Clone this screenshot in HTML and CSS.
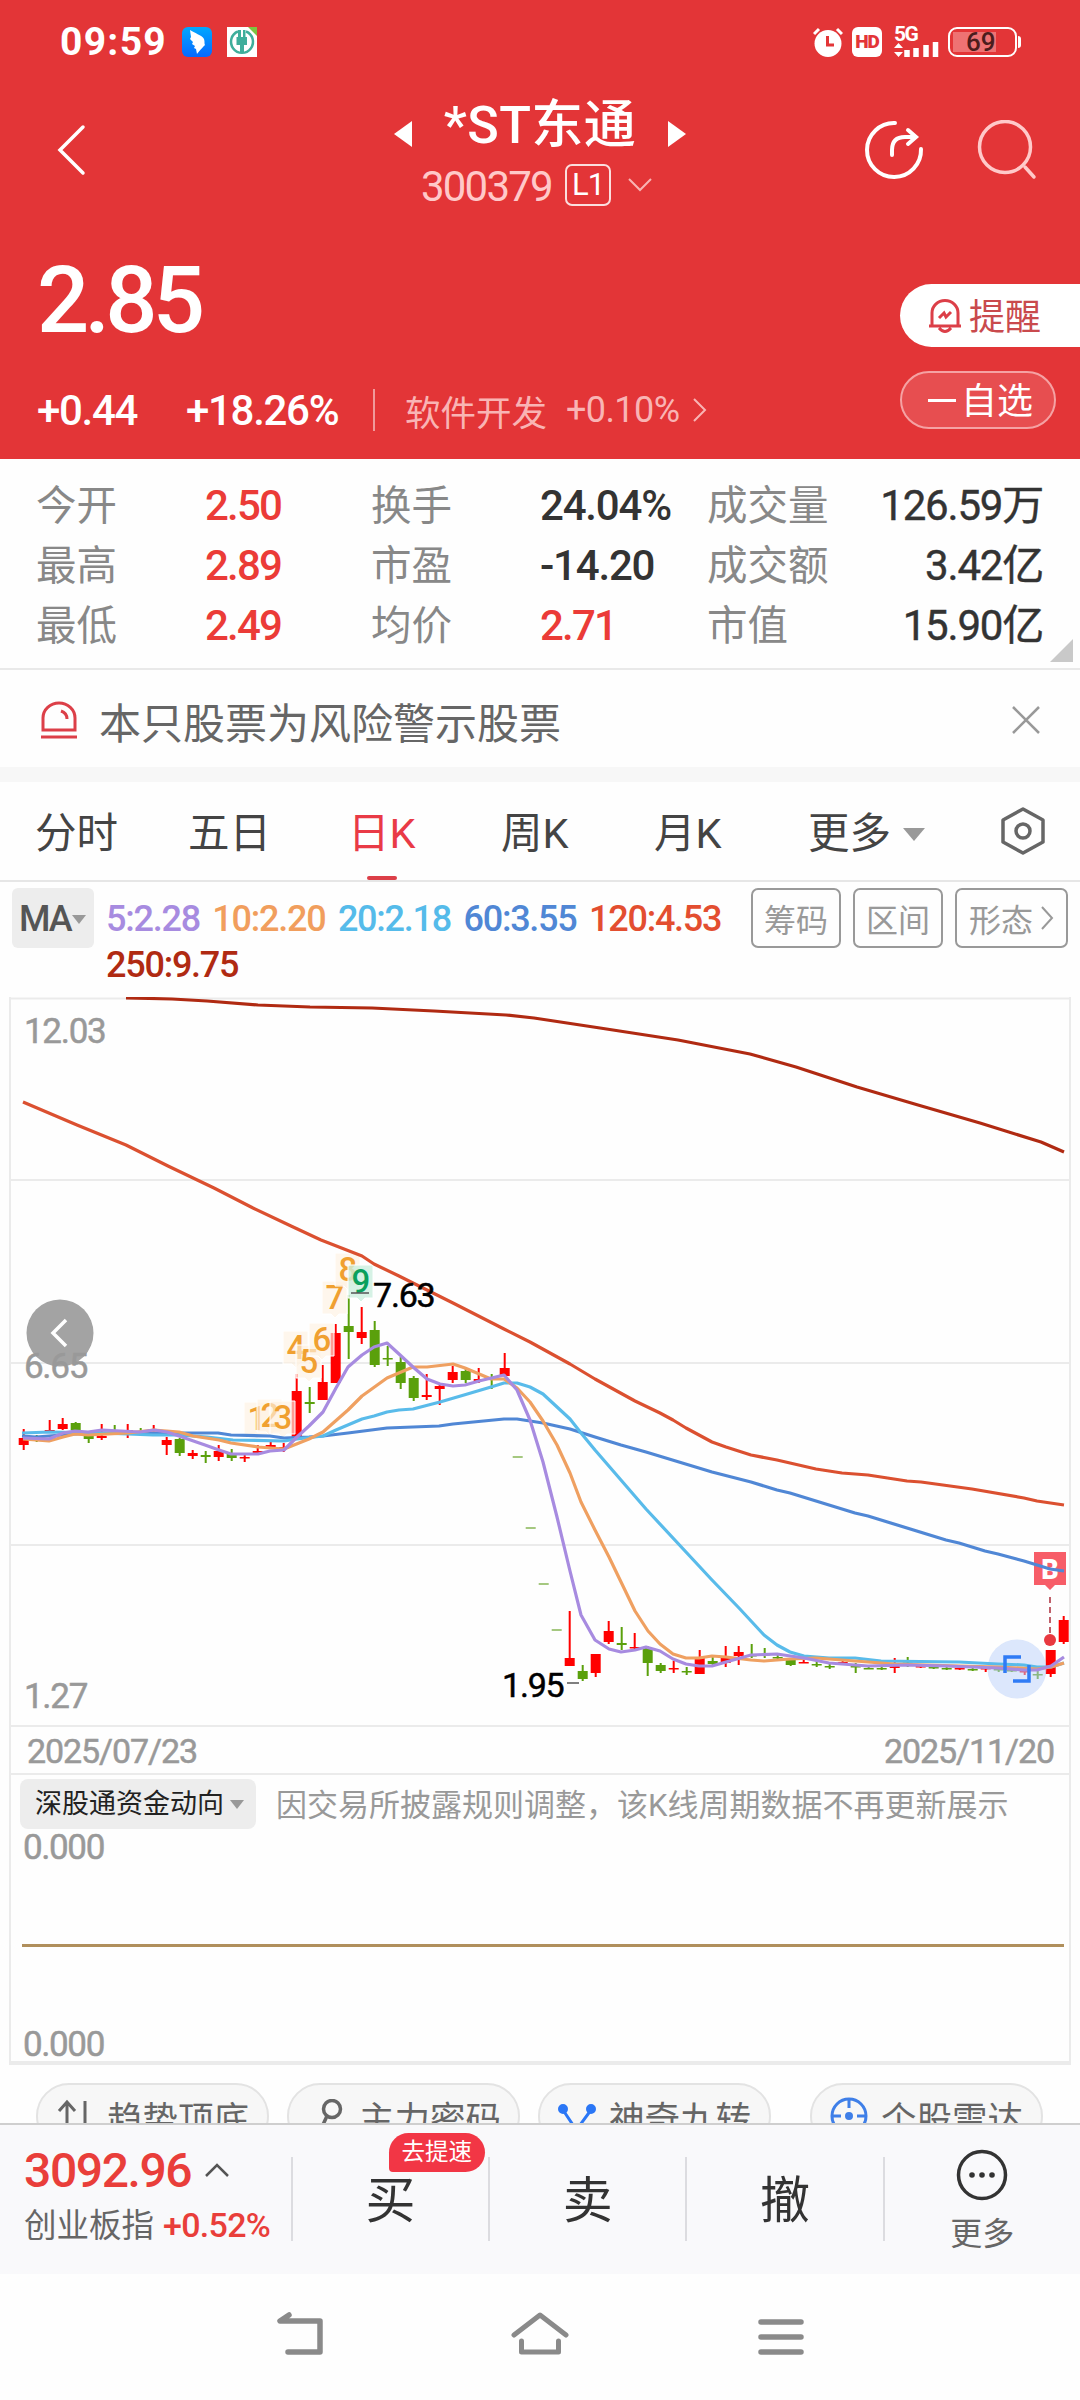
FILE: index.html
```html
<!DOCTYPE html>
<html lang="zh-CN">
  <head>
    <meta charset="UTF-8" />
    <title>*ST东通 300379</title>
    <link rel="stylesheet" href="styles.css">
  </head>
  <body>
    <header class="header">
      <div class="status-bar">
        <span class="clock">09:59</span>
        <svg class="app-icon" width="30" height="30" viewBox="0 0 30 30">
          <defs>
            <linearGradient id="wingBg" x1="0" y1="0" x2="0" y2="1">
              <stop offset="0" stop-color="#00a8ff" />
              <stop offset="1" stop-color="#0868ff" />
            </linearGradient>
          </defs>
          <rect width="30" height="30" rx="6" fill="url(#wingBg)" />
          <path d="M8 3C12 6 20 8 22 12C23 15 22 17 23 18C21 20 19 22 15 27L14 22L12 21L13 19L10 17L11 15L8 12L9 10Z" fill="#fff" />
        </svg>
        <svg class="app-icon" width="30" height="30" viewBox="0 0 30 30">
          <rect width="30" height="30" fill="#fff" />
          <path d="M11 4.500A11 11 0 1 0 19 4.500" fill="none" stroke="#3fae9b" stroke-width="2.500" />
          <path d="M11 3V10H9.500V18H13V26H17V18H20V10H18.500V3H16V10H14V3Z" fill="#3fae9b" />
          <path d="M21 0H30V9Z" fill="#7cc440" />
        </svg>
        <div class="status-right">
          <svg width="30" height="30" viewBox="0 0 30 30">
            <circle cx="15" cy="16.500" r="13.500" fill="#fff" />
            <path d="M1 7L6 2M29 7L24 2" stroke="#fff" stroke-width="3" />
            <path d="M14.500 9V18H21" fill="none" stroke="#e33537" stroke-width="3" />
          </svg>
          <span class="hd">HD</span>
          <div class="signal">
            <span>5G</span>
            <svg width="45" height="16" viewBox="0 0 45 16">
              <path d="M0 6L4.500 1L9 6ZM0 10H9L4.500 15Z" fill="#fff" />
              <path d="M13 8V15M22 6V15M32 3V15M41.500 0V15" stroke="#fff" stroke-width="5.500" />
            </svg>
          </div>
          <div class="battery"><span>69</span></div>
        </div>
      </div>

      <div class="title-bar">
        <svg class="back" width="32" height="52" viewBox="0 0 32 52">
          <path d="M28 3L5 26L28 49" fill="none" stroke="#fff" stroke-width="3.500" stroke-linecap="round" />
        </svg>
        <div class="title">
          <div class="name-row">
            <svg width="19" height="28" viewBox="0 0 19 28"><path d="M19 1V27L1 14Z" fill="#fff" /></svg>
            <h1>*ST东通</h1>
            <svg width="19" height="28" viewBox="0 0 19 28"><path d="M0 1V27L18 14Z" fill="#fff" /></svg>
          </div>
          <div class="code-row">
            <span class="code">300379</span>
            <span class="level">L1</span>
            <svg width="24" height="14" viewBox="0 0 24 14"><path d="M1 1L12 12L23 1" fill="none" stroke="#f9b4b4" stroke-width="2" /></svg>
          </div>
        </div>
        <div class="title-actions">
          <svg width="60" height="60" viewBox="0 0 60 60" fill="none" stroke="#fff" stroke-width="4" stroke-linecap="round">
            <path d="M31 3A27 27 0 1 0 57 29" />
            <path d="M28 35V30Q28 17 41 17H50M44 10L52 17L44 24" />
          </svg>
          <svg width="60" height="60" viewBox="0 0 60 60" fill="none" stroke="#ffc9c9" stroke-width="3.500" stroke-linecap="round">
            <circle cx="28" cy="27" r="25.500" />
            <path d="M48 47L57 57" />
          </svg>
        </div>
      </div>

      <div class="quote">
        <div class="quote-left">
          <div class="price">2.85</div>
          <div class="change-row">
            <span class="change">+0.44</span>
            <span class="change percent">+18.26%</span>
            <span class="sector">软件开发</span>
            <span class="sector-change">+0.10%</span>
            <svg width="14" height="24" viewBox="0 0 14 24"><path d="M1 1L12 12L1 23" fill="none" stroke="#f9b4b4" stroke-width="2" /></svg>
          </div>
        </div>
        <div class="quote-right">
          <div class="remind">
            <svg width="34" height="36" viewBox="0 0 34 36" fill="none" stroke="#dc3f48" stroke-width="3">
              <path d="M4 27V15A13 12.500 0 0 1 30 15V27M1 28H33M11 30Q17 37 23 30" />
              <path d="M11 20L16 15L18 19L23 14" />
            </svg>
            <span>提醒</span>
          </div>
          <div class="favorite"><i></i><span>自选</span></div>
        </div>
      </div>
    </header>

    <section class="stats">
      <span class="label">今开</span><span class="value up">2.50</span>
      <span class="label">换手</span><span class="value">24.04%</span>
      <span class="label">成交量</span><span class="value right">126.59万</span>
      <span class="label">最高</span><span class="value up">2.89</span>
      <span class="label">市盈</span><span class="value">-14.20</span>
      <span class="label">成交额</span><span class="value right">3.42亿</span>
      <span class="label">最低</span><span class="value up">2.49</span>
      <span class="label">均价</span><span class="value up">2.71</span>
      <span class="label">市值</span><span class="value right">15.90亿</span>
      <i class="corner"></i>
    </section>

    <section class="notice">
      <svg width="36" height="38" viewBox="0 0 36 38" fill="none" stroke="#dc3f48" stroke-width="3">
        <path d="M2 29V17A16 15 0 0 1 34 17V29ZM0 36H36M20 10Q26 12 26 18" />
      </svg>
      <span>本只股票为风险警示股票</span>
      <svg class="close" width="28" height="28" viewBox="0 0 28 28"><path d="M1 1L27 27M27 1L1 27" stroke="#999" stroke-width="2.500" /></svg>
    </section>

    <nav class="tabs">
      <span>分时</span>
      <span>五日</span>
      <span class="active">日K</span>
      <span>周K</span>
      <span>月K</span>
      <span>更多<i class="arrow-down"></i></span>
      <svg width="46" height="48" viewBox="0 0 46 48" fill="none" stroke="#666" stroke-width="3.500" stroke-linejoin="round">
        <path d="M23 2L43 13V35L23 46L3 35V13Z" />
        <circle cx="23" cy="24" r="7" />
      </svg>
    </nav>

    <section class="ma-bar">
      <div class="ma-select">MA<i class="arrow-down small"></i></div>
      <div class="ma-list">
        <span class="ma5">5:2.28</span>
        <span class="ma10">10:2.20</span>
        <span class="ma20">20:2.18</span>
        <span class="ma60">60:3.55</span>
        <span class="ma120">120:4.53</span>
        <span class="ma250">250:9.75</span>
      </div>
      <div class="tools">
        <span>筹码</span>
        <span>区间</span>
        <span>形态<svg width="14" height="24" viewBox="0 0 14 24"><path d="M2 1L12 12L2 23" fill="none" stroke="#999" stroke-width="2" /></svg></span>
      </div>
    </section>

    <section class="chart-box">
      <svg id="chart" width="1080" height="730" viewBox="0 997 1080 730">
        <g class="grid">
          <path d="M10 998.500H1070M10 1180H1070M10 1363H1070M10 1545H1070M10 1726H1070" />
        </g>
        <g id="candles"></g>
        <g id="tags"></g>
        <g class="buy">
          <path d="M1034 1552H1066V1585H1055L1050 1590L1045 1585H1034Z" fill="#f75d68" />
          <text x="1050" y="1579">B</text>
          <path d="M1050 1597V1635" stroke="#c0606a" stroke-width="2" stroke-dasharray="6 4" />
          <circle cx="1050" cy="1640" r="6" fill="#e8383f" />
        </g>
        <circle cx="1017" cy="1669" r="29.500" fill="#b9d0fa" fill-opacity=".5" />
        <g id="lines"></g>
        <path d="M351 1293H369M567 1683H579" stroke="#555" stroke-width="1.500" />
        <text class="mark" x="373" y="1307">7.63</text>
        <text class="mark" x="502" y="1697">1.95</text>
        <circle cx="60" cy="1333" r="33.500" fill="#a3a3a3" />
        <path d="M66 1320L53 1333L66 1346" fill="none" stroke="#fff" stroke-width="3.500" />
        <text class="axis" x="24" y="1043">12.03</text>
        <text class="axis" x="24" y="1378">6.65</text>
        <text class="axis" x="24" y="1708">1.27</text>
        <path d="M1021 1657H1005V1673M1013 1681H1029V1665" fill="none" stroke="#2f7bf5" stroke-width="3.500" />
      </svg>
      <div class="dates"><span>2025/07/23</span><span>2025/11/20</span></div>
      <div class="sub-head">
        <span class="sub-select">深股通资金动向<i class="arrow-down small"></i></span>
        <span class="sub-note">因交易所披露规则调整，该K线周期数据不再更新展示</span>
      </div>
      <div class="sub-chart">
        <span>0.000</span>
        <i></i>
        <span>0.000</span>
      </div>
    </section>

    <section class="chips">
      <div class="chip">
        <svg width="34" height="34" viewBox="0 0 34 34" fill="none" stroke="#666" stroke-width="3"><path d="M11 32V3M3 12L11 3L19 12M29 2V32" /></svg>趋势顶底
      </div>
      <div class="chip key">
        <svg width="34" height="34" viewBox="0 0 34 34" fill="none" stroke="#666" stroke-width="3.500"><circle cx="19" cy="10" r="8.500" /><path d="M14 17L8 30" /></svg>主力密码
      </div>
      <div class="chip wide">
        <svg width="38" height="34" viewBox="0 0 38 34" fill="none" stroke="#2b77f6" stroke-width="3"><path d="M5 11L15 26H22L33 11" /><g fill="#2b77f6"><circle cx="5" cy="10" r="3.500" /><circle cx="33" cy="10" r="3.500" /></g></svg>神奇九转
      </div>
      <i class="chip-line"></i>
      <div class="chip wide">
        <svg width="38" height="38" viewBox="0 0 38 38" fill="none" stroke="#3f7fe8" stroke-width="3"><circle cx="19" cy="19" r="17" /><path d="M19 2V11M2 19H11M27 19H36" /><circle cx="19" cy="19" r="2.500" fill="#3f7fe8" /></svg>个股雷达
      </div>
    </section>

    <footer class="trade-bar">
      <div class="index">
        <div class="index-value">3092.96<svg width="24" height="14" viewBox="0 0 24 14"><path d="M1 13L12 2L23 13" fill="none" stroke="#555" stroke-width="2.500" /></svg></div>
        <div class="index-name">创业板指 <b>+0.52%</b></div>
      </div>
      <div class="trade">买<span class="badge">去提速</span></div>
      <div class="trade">卖</div>
      <div class="trade">撤</div>
      <div class="trade more">
        <svg width="52" height="52" viewBox="0 0 52 52">
          <circle cx="26" cy="26" r="23.500" fill="none" stroke="#333" stroke-width="3.500" />
          <g fill="#333"><circle cx="16" cy="26" r="2.800" /><circle cx="26" cy="26" r="2.800" /><circle cx="36" cy="26" r="2.800" /></g>
        </svg>
        <span>更多</span>
      </div>
    </footer>

    <div class="system-nav">
      <svg width="48" height="44" viewBox="0 0 48 44" fill="none" stroke="#8a8a8a" stroke-width="5.500" stroke-linecap="round" stroke-linejoin="round">
        <path d="M13 3L4 9H44V40H12" />
      </svg>
      <svg width="58" height="44" viewBox="0 0 58 44" fill="none" stroke="#8a8a8a" stroke-width="5" stroke-linecap="round" stroke-linejoin="round">
        <path d="M3 23L29 3L55 23M10.500 29V40H47.500V29" />
      </svg>
      <svg width="46" height="44" viewBox="0 0 46 44" fill="none" stroke="#8a8a8a" stroke-width="5.500" stroke-linecap="round">
        <path d="M3 10H43M3 25H43M3 40H43" />
      </svg>
    </div>
    <script src="chart.js"></script>
  </body>
</html>
```

FILE: styles.css
```css
* {
  box-sizing: border-box;
}
body {
  margin: 0;
  width: 1080px;
  height: 2400px;
  overflow: hidden;
  background: #fefefe;
  color: #333;
  font-family: Roboto, "Noto Sans CJK SC", sans-serif;
  display: flex;
  flex-direction: column;
}
svg {
  display: block;
  flex: none;
}

/* Header */
.header {
  height: 459px;
  background: #e33537;
  color: #fff;
}
.status-bar {
  display: flex;
  align-items: center;
  height: 84px;
  padding: 0 60px 0 60px;
}
.clock {
  width: 122px;
  font-size: 39px;
  font-weight: 700;
  letter-spacing: 1.3px;
}
.app-icon {
  margin-right: 15px;
}
.status-right {
  display: flex;
  align-items: center;
  margin-left: auto;
}
.hd {
  width: 30px;
  height: 30px;
  margin: 0 12px 0 9px;
  border-radius: 6px;
  background: #fff;
  color: #e33537;
  font-size: 19px;
  font-weight: 900;
  line-height: 30px;
  text-align: center;
  letter-spacing: -1px;
}
.signal {
  width: 45px;
  height: 32px;
  margin-right: 9px;
}
.signal span {
  display: block;
  height: 16px;
  font-size: 21px;
  font-weight: 700;
  line-height: 17px;
  letter-spacing: -1.5px;
}
.battery {
  position: relative;
  width: 69px;
  height: 30px;
  padding: 3px;
  border: 2px solid #fff;
  border-radius: 9px;
  margin-right: 3px;
}
.battery span {
  display: block;
  width: 43px;
  height: 20px;
  padding-left: 13px;
  background: #ee7273;
  color: #4c1c1c;
  font-size: 26px;
  font-weight: 500;
  line-height: 21px;
}
.battery::after {
  content: "";
  position: absolute;
  right: -6px;
  top: 7px;
  width: 3px;
  height: 12px;
  border-radius: 0 3px 3px 0;
  background: #fff;
}
.title-bar {
  display: grid;
  grid-template-columns: 340px 400px 340px;
  height: 140px;
}
.back {
  margin: 40px 0 0 55px;
}
.name-row {
  display: flex;
  align-items: center;
  justify-content: center;
  height: 80px;
  padding-top: 18px;
}
.name-row svg {
  margin-top: 2px;
}
h1 {
  width: 256px;
  margin: -14px 0 0;
  font-size: 52px;
  font-weight: 500;
  line-height: 60px;
  text-align: center;
  letter-spacing: 0.5px;
}
.code-row {
  display: flex;
  align-items: center;
  height: 46px;
  margin-top: -3px;
  padding: 2px 0 0 81px;
}
.code {
  width: 144px;
  padding-top: 2px;
  color: #ffc9c9;
  font-size: 42px;
  letter-spacing: -1.8px;
}
.level {
  width: 46px;
  height: 42px;
  margin-right: 17px;
  border: 2px solid #fbdede;
  border-radius: 7px;
  font-size: 31px;
  line-height: 38px;
  text-align: center;
  letter-spacing: -1px;
}
.title-actions {
  display: flex;
  gap: 53px;
  padding: 36px 0 0 124px;
}
.quote {
  display: flex;
  justify-content: space-between;
}
.quote-left {
  padding-left: 37px;
}
.price {
  height: 148px;
  font-size: 92px;
  font-weight: 500;
  line-height: 154px;
  letter-spacing: -4.8px;
}
.change-row {
  display: flex;
  align-items: center;
  height: 76px;
}
.change {
  width: 149px;
  font-size: 42px;
  font-weight: 500;
  letter-spacing: -1.3px;
}
.percent {
  width: 187px;
}
.sector {
  display: flex;
  align-items: center;
  height: 42px;
  padding-left: 30px;
  border-left: 2px solid #f09a9b;
  color: #f9b4b4;
  font-size: 35.5px;
}
.sector-change {
  width: 127px;
  margin-left: 19px;
  color: #f9b4b4;
  font-size: 36px;
  letter-spacing: -0.6px;
}
.quote-right {
  width: 180px;
  padding-top: 60px;
}
.remind,
.favorite {
  display: flex;
  align-items: center;
  font-size: 36px;
}
.remind span,
.favorite span {
  padding-bottom: 4px;
}
.remind {
  height: 63px;
  padding-left: 28px;
  gap: 7px;
  border-radius: 32px 0 0 32px;
  background: #fff;
  color: #c94a4d;
}
.favorite {
  width: 156px;
  height: 58px;
  margin-top: 24px;
  padding-left: 26px;
  gap: 5px;
  border: 2px solid #f5a2a3;
  border-radius: 29px;
  background: #e74e50;
}
.favorite i {
  width: 28px;
  height: 3px;
  background: #fff;
}

/* Today's figures */
.stats {
  position: relative;
  display: grid;
  grid-template-columns: 168px 167px 168px 168px 140px 1fr;
  grid-auto-rows: 60px;
  height: 211px;
  padding: 17px 37px 0 36px;
  border-bottom: 2px solid #e9e9e9;
  line-height: 60px;
}
.label {
  color: #888;
  font-size: 40.5px;
}
.value {
  padding-left: 1px;
  font-size: 42px;
  font-weight: 500;
  letter-spacing: -1.2px;
  white-space: nowrap;
}
.up {
  color: #eb3b37;
  letter-spacing: -1.8px;
}
.right {
  font-weight: 400;
  text-align: right;
  -webkit-text-stroke: 0.4px #333;
}
.corner {
  position: absolute;
  right: 7px;
  bottom: 6px;
  border-left: 23px solid transparent;
  border-bottom: 23px solid #c9c9c9;
}

.notice {
  display: flex;
  align-items: center;
  height: 112px;
  padding: 2px 40px 0 41px;
  border-bottom: 15px solid #f7f7f7;
  color: #666;
  font-size: 42px;
}
.notice span {
  margin: 2px 0 0 22px;
}
.close {
  margin-left: auto;
}

/* Period tabs */
.tabs {
  display: grid;
  grid-template-columns: 153px 160px 153px 153px 154px 192px 1fr;
  align-items: center;
  height: 100px;
  padding-left: 35px;
  border-bottom: 2px solid #e6e6e6;
  color: #444;
  font-size: 41.5px;
}
.tabs span {
  position: relative;
  height: 98px;
  line-height: 103px;
}
.tabs .active {
  color: #e93a46;
}
.active::after {
  content: "";
  position: absolute;
  left: 19px;
  bottom: 0;
  width: 30px;
  height: 4px;
  border-radius: 2px;
  background: #dc3f48;
}
.arrow-down {
  display: inline-block;
  margin-left: 12px;
  border: 11px solid transparent;
  border-top: 13px solid #999;
  border-bottom: 0;
  vertical-align: 7px;
}
.small {
  margin-left: 1px;
  border-width: 9px 7px 0;
}

/* Moving averages */
.ma-bar {
  display: flex;
  height: 115px;
  padding: 6px 12px 0;
}
.ma-select {
  width: 82px;
  height: 60px;
  padding-left: 7px;
  border-radius: 6px;
  background: #ededed;
  color: #555;
  font-size: 36px;
  font-weight: 500;
  line-height: 63px;
  letter-spacing: -2px;
  white-space: nowrap;
}
.ma-list {
  display: flex;
  flex-wrap: wrap;
  align-content: flex-start;
  width: 643px;
  padding: 8px 0 0 12px;
  column-gap: 12.5px;
  font-size: 36px;
  font-weight: 500;
  line-height: 46px;
  letter-spacing: -1.25px;
}
.ma5 { color: #a78be0; }
.ma10 { color: #f19e5d; }
.ma20 { color: #55bbea; }
.ma60 { color: #5087d5; }
.ma120 { color: #e34e30; }
.ma250 { color: #b02a12; }
.tools {
  display: flex;
  gap: 12px;
  margin-left: 14px;
}
.tools span {
  display: flex;
  align-items: center;
  justify-content: center;
  width: 90px;
  height: 60px;
  border: 2px solid #999;
  border-radius: 7px;
  color: #999;
  font-size: 32px;
}
.tools span:last-child {
  width: 113px;
  gap: 7px;
}

/* Charts */
.chart-box {
  height: 1068px;
  background: linear-gradient(#ebebeb, #ebebeb) 9px 0 / 2px 1066px no-repeat,
    linear-gradient(#ebebeb, #ebebeb) 1069px 0 / 2px 1066px no-repeat;
}
.grid {
  stroke: #ebebeb;
  stroke-width: 2;
}
.axis {
  fill: #999;
  font-size: 35px;
  letter-spacing: -1.3px;
  stroke: #999;
  stroke-width: 0.5;
}
.mark {
  fill: #000;
  font-size: 34px;
  letter-spacing: -1.2px;
  stroke: #000;
  stroke-width: 0.5;
}
.tag {
  font-size: 33px;
  font-weight: 500;
  text-anchor: middle;
}
.buy text {
  fill: #fff;
  font-size: 27px;
  font-weight: 900;
  text-anchor: middle;
}
.dates {
  display: flex;
  justify-content: space-between;
  height: 48px;
  margin: 0 10px;
  padding: 0 16px 0 17px;
  border-bottom: 2px solid #ebebeb;
  color: #999;
  font-size: 34px;
  line-height: 49px;
  letter-spacing: -1.1px;
  -webkit-text-stroke: 0.5px #999;
}
.sub-head {
  display: flex;
  align-items: center;
  height: 56px;
  padding: 1px 0 0 20px;
}
.sub-select {
  width: 236px;
  height: 50px;
  margin-right: 20px;
  padding-left: 15px;
  border-radius: 8px;
  background: #ededed;
  color: #222;
  font-size: 27px;
  line-height: 51px;
  white-space: nowrap;
}
.sub-select .small {
  margin-left: 6px;
  vertical-align: 4px;
}
.sub-note {
  margin-top: -2px;
  color: #999;
  font-size: 31px;
  white-space: nowrap;
}
.sub-chart {
  display: flex;
  flex-direction: column;
  justify-content: space-between;
  height: 234px;
  margin: 0 9px;
  padding: 0 14px;
  border-bottom: 4px solid #ebebeb;
  color: #999;
  font-size: 35px;
  line-height: 33px;
  letter-spacing: -1.4px;
  -webkit-text-stroke: 0.5px #999;
}
.sub-chart i {
  height: 3px;
  margin: -1px -7px 0 -1px;
  background: #b08f5c;
}

/* Shortcuts, cut off by the trade bar */
.chips {
  display: flex;
  height: 58px;
  padding: 18px 36px 0;
  overflow: hidden;
}
.chip {
  display: flex;
  align-items: center;
  flex: none;
  width: 233px;
  height: 66px;
  margin-right: 18px;
  padding-left: 18px;
  gap: 17px;
  border: 2px solid #e3e3e3;
  border-radius: 33px;
  background: #f7f7f7;
  color: #666;
  font-size: 35.5px;
  white-space: nowrap;
}
.key {
  padding-left: 24px;
  gap: 12px;
}
.wide {
  gap: 13px;
}
.chip-line {
  width: 2px;
  height: 40px;
  margin: 13px 20px 0 1px;
  background: #ddd;
}

/* Trade bar */
.trade-bar {
  display: flex;
  height: 151px;
  border-top: 2px solid #cfcfcf;
  background: #f9f9fb;
}
.index {
  width: 293px;
  padding: 17px 0 0 24px;
}
.index-value {
  display: flex;
  align-items: center;
  gap: 14px;
  height: 56px;
  color: #e93e3a;
  font-size: 48px;
  font-weight: 500;
  letter-spacing: -1.4px;
}
.index-name {
  height: 54px;
  color: #666;
  font-size: 32.5px;
  line-height: 54px;
  white-space: nowrap;
}
.index-name b {
  margin-left: 1px;
  color: #e93e3a;
  font-size: 34px;
  font-weight: 500;
  letter-spacing: -0.7px;
}
.trade {
  position: relative;
  flex: none;
  width: 197.3px;
  padding-left: 2px;
  font-size: 50px;
  line-height: 152px;
  text-align: center;
}
.trade::before {
  content: "";
  position: absolute;
  left: 0;
  top: 32px;
  width: 2px;
  height: 84px;
  background: #dcdce0;
}
.badge {
  position: absolute;
  left: 98px;
  top: 8px;
  width: 96px;
  height: 39px;
  border-radius: 20px 20px 20px 4px;
  background: #f23645;
  color: #fff;
  font-size: 23.5px;
  line-height: 38px;
}
.more {
  display: flex;
  flex-direction: column;
  align-items: center;
  padding-top: 24px;
  color: #666;
  font-size: 32px;
  line-height: 66px;
}
.system-nav {
  display: grid;
  grid-template-columns: 235px 247px 46px;
  height: 126px;
  padding: 38px 0 0 276px;
  background: #fefefe;
}
```

FILE: chart.js
```js
const NS = "http://www.w3.org/2000/svg";
const RED = "#ff0000";
const GREEN = "#5aa00c";

// [color, body top, body bottom, wick top, wick bottom]
const candles = [
  ["r", 1438, 1445, 1429, 1450], ["g", 1437, 1438, 1435, 1442], ["r", 1430, 1431, 1420, 1431],
  ["r", 1424, 1429, 1418, 1430], ["g", 1423, 1430, 1422, 1431], ["g", 1436, 1439, 1434, 1443],
  ["r", 1436, 1438, 1424, 1440], ["g", 1432, 1433, 1425, 1435], ["r", 1430, 1431, 1424, 1438],
  ["g", 1431, 1432, 1428, 1432], ["r", 1429, 1430, 1425, 1432], ["r", 1440, 1445, 1437, 1455],
  ["g", 1439, 1453, 1438, 1456], ["r", 1453, 1456, 1450, 1459], ["g", 1455, 1457, 1451, 1463],
  ["r", 1451, 1457, 1445, 1461], ["g", 1454, 1458, 1449, 1461], ["r", 1457, 1458, 1455, 1462],
  ["r", 1451, 1453, 1445, 1455], ["r", 1445, 1447, 1442, 1449], ["r", 1447, 1448, 1443, 1452],
  ["r", 1391, 1437, 1374, 1440], ["g", 1402, 1404, 1387, 1413], ["r", 1382, 1400, 1365, 1400],
  ["r", 1333, 1383, 1324, 1383], ["g", 1326, 1332, 1295, 1359], ["r", 1332, 1338, 1307, 1344],
  ["g", 1330, 1365, 1321, 1367], ["g", 1358, 1359, 1346, 1366], ["g", 1362, 1383, 1357, 1389],
  ["g", 1378, 1398, 1376, 1401], ["r", 1395, 1397, 1374, 1400], ["r", 1386, 1389, 1383, 1405],
  ["r", 1372, 1380, 1366, 1383], ["g", 1371, 1380, 1367, 1383], ["r", 1379, 1381, 1368, 1383],
  ["g", 1378, 1379, 1374, 1389], ["r", 1368, 1376, 1353, 1377], ["d", 1456, 1458, 1457, 1457],
  ["d", 1527, 1529, 1528, 1528], ["d", 1583, 1585, 1584, 1584], ["d", 1629, 1631, 1630, 1630],
  ["r", 1658, 1666, 1611, 1666], ["g", 1671, 1679, 1665, 1681], ["r", 1654, 1673, 1654, 1677],
  ["r", 1631, 1642, 1621, 1644], ["g", 1643, 1645, 1627, 1650], ["r", 1647, 1648, 1633, 1650],
  ["g", 1648, 1663, 1646, 1676], ["g", 1665, 1671, 1663, 1673], ["r", 1668, 1669, 1661, 1673],
  ["g", 1671, 1672, 1667, 1675], ["r", 1657, 1674, 1650, 1674], ["g", 1661, 1664, 1657, 1665],
  ["r", 1657, 1663, 1646, 1667], ["r", 1652, 1656, 1646, 1665], ["g", 1655, 1656, 1644, 1658],
  ["g", 1654, 1655, 1648, 1658], ["g", 1657, 1658, 1653, 1661], ["g", 1659, 1665, 1658, 1666],
  ["r", 1662, 1663, 1660, 1663], ["g", 1664, 1665, 1661, 1667], ["g", 1666, 1667, 1662, 1669],
  ["r", 1662, 1663, 1659, 1665], ["g", 1666, 1667, 1663, 1673], ["g", 1668, 1669, 1666, 1669],
  ["g", 1668, 1669, 1666, 1670], ["r", 1666, 1668, 1658, 1673], ["g", 1661, 1662, 1657, 1667],
  ["r", 1666, 1667, 1664, 1668], ["g", 1667, 1668, 1665, 1669], ["g", 1668, 1669, 1667, 1670],
  ["r", 1668, 1669, 1667, 1670], ["g", 1669, 1670, 1667, 1671], ["r", 1668, 1669, 1666, 1672],
  ["g", 1669, 1670, 1666, 1672], ["g", 1670, 1671, 1668, 1672], ["r", 1671, 1672, 1668, 1675],
  ["g", 1674, 1675, 1671, 1679], ["r", 1650, 1674, 1650, 1677], ["r", 1620, 1642, 1616, 1644]
];

const lines = {
  "#b02a12": "126,998 172,999 207,1001 258,1005 310,1007 372,1008 434,1011 506,1015 534,1018 600,1028 678,1040 750,1054 796,1067 857,1087 918,1105 980,1123 1041,1142 1064,1152",
  "#db5030": "23,1102 77,1125 126,1145 168,1166 214,1188 253,1208 291,1226 321,1240 362,1256 374,1264 399,1276 453,1303 504,1329 530,1342 570,1364 595,1379 635,1401 660,1413 673,1420 686,1428 712,1442 726,1447 751,1455 777,1460 816,1469 842,1473 868,1475 907,1481 921,1482 972,1489 1024,1498 1037,1501 1064,1505",
  "#5087d5": "22,1436 36,1437 75,1434 102,1433 179,1433 218,1433 231,1435 270,1436 284,1438 309,1437 323,1436 348,1433 387,1428 439,1426 453,1424 504,1419 517,1419 543,1423 570,1429 595,1437 621,1445 646,1452 712,1472 751,1482 777,1490 790,1493 855,1513 868,1516 946,1540 959,1543 985,1551 998,1554 1024,1561 1050,1569 1064,1571",
  "#59bbea": "22,1433 50,1432 102,1433 153,1435 179,1435 207,1437 233,1440 284,1441 297,1439 323,1436 336,1430 362,1419 374,1416 387,1412 399,1410 413,1409 440,1402 464,1395 491,1387 504,1383 517,1383 530,1387 543,1394 570,1419 581,1433 595,1450 646,1509 699,1566 712,1580 739,1608 764,1635 777,1645 790,1652 804,1656 829,1658 855,1658 881,1661 959,1662 998,1664 1024,1665 1037,1667 1051,1667 1064,1663",
  "#efa061": "23,1439 36,1440 49,1441 63,1437 75,1434 88,1435 128,1433 154,1430 179,1432 193,1436 219,1440 231,1443 258,1447 284,1449 309,1439 323,1432 348,1410 362,1396 387,1378 413,1367 427,1367 453,1364 465,1368 491,1379 504,1379 517,1388 530,1402 543,1421 557,1445 570,1473 581,1502 595,1530 609,1557 635,1611 648,1631 660,1644 673,1654 686,1658 699,1658 712,1656 726,1657 751,1660 764,1661 790,1659 816,1658 842,1660 868,1662 894,1664 959,1666 998,1667 1037,1669 1051,1667 1064,1663",
  "#a78be0": "23,1438 49,1439 63,1433 75,1431 88,1432 102,1430 140,1432 154,1430 167,1432 179,1436 205,1445 219,1450 231,1454 258,1454 270,1451 284,1450 297,1437 309,1426 323,1412 336,1388 348,1367 362,1355 374,1347 387,1343 399,1354 413,1367 427,1379 440,1384 453,1386 465,1385 479,1381 504,1375 517,1390 530,1420 543,1462 557,1517 570,1571 581,1615 595,1640 609,1649 621,1652 635,1650 646,1647 660,1651 673,1659 686,1664 699,1666 712,1666 726,1662 751,1655 777,1654 804,1658 829,1663 868,1666 907,1665 946,1666 998,1668 1024,1670 1037,1670 1051,1666 1064,1657"
};

// nine-turn marks: [text, center x, baseline]
const tags = [
  ["1", 257, 1430], ["2", 270, 1427], ["3", 283, 1429], ["4", 296, 1359],
  ["5", 309, 1373], ["6", 322, 1351], ["7", 335, 1309], ["8", 348, 1281], ["9", 361, 1293]
];

function add(parent, name, attrs, text) {
  const el = document.createElementNS(NS, name);
  for (const key in attrs) {
    el.setAttribute(key, attrs[key]);
  }
  if (text) {
    el.textContent = text;
  }
  parent.appendChild(el);
}

const candleGroup = document.getElementById("candles");
candles.forEach(function (c, i) {
  const x = 23.7 + i * 13;
  const color = c[0] === "r" ? RED : c[0] === "g" ? GREEN : "#a5c880";
  const thin = c[2] - c[1] < 2;
  add(candleGroup, "rect", { x: x - 1, y: c[3], width: 2, height: c[4] - c[3], fill: color });
  add(candleGroup, "rect", { x: x - 5, y: c[1], width: 10, height: thin ? 1.5 : c[2] - c[1], fill: color });
});

const tagGroup = document.getElementById("tags");
tags.forEach(function (t) {
  const nine = t[0] === "9";
  const x = t[1];
  const y = t[2];
  add(tagGroup, "path", {
    d: `M${x - 13} ${y - 28}H${x + 12}V${y + 5}H${x + 4}L${x} ${y + 9}L${x - 4} ${y + 5}H${x - 13}Z`,
    fill: nine ? "#ccefdf" : "#fdf1e2",
    "fill-opacity": nine ? 0.8 : 0.65,
    stroke: "#fff"
  });
  add(tagGroup, "text", { x: x, y: y, class: "tag", fill: nine ? "#0aa05c" : "#f0a030" }, t[0]);
});

const lineGroup = document.getElementById("lines");
for (const color in lines) {
  add(lineGroup, "polyline", { points: lines[color], fill: "none", stroke: color, "stroke-width": 3.2, "stroke-linejoin": "round" });
}
```
